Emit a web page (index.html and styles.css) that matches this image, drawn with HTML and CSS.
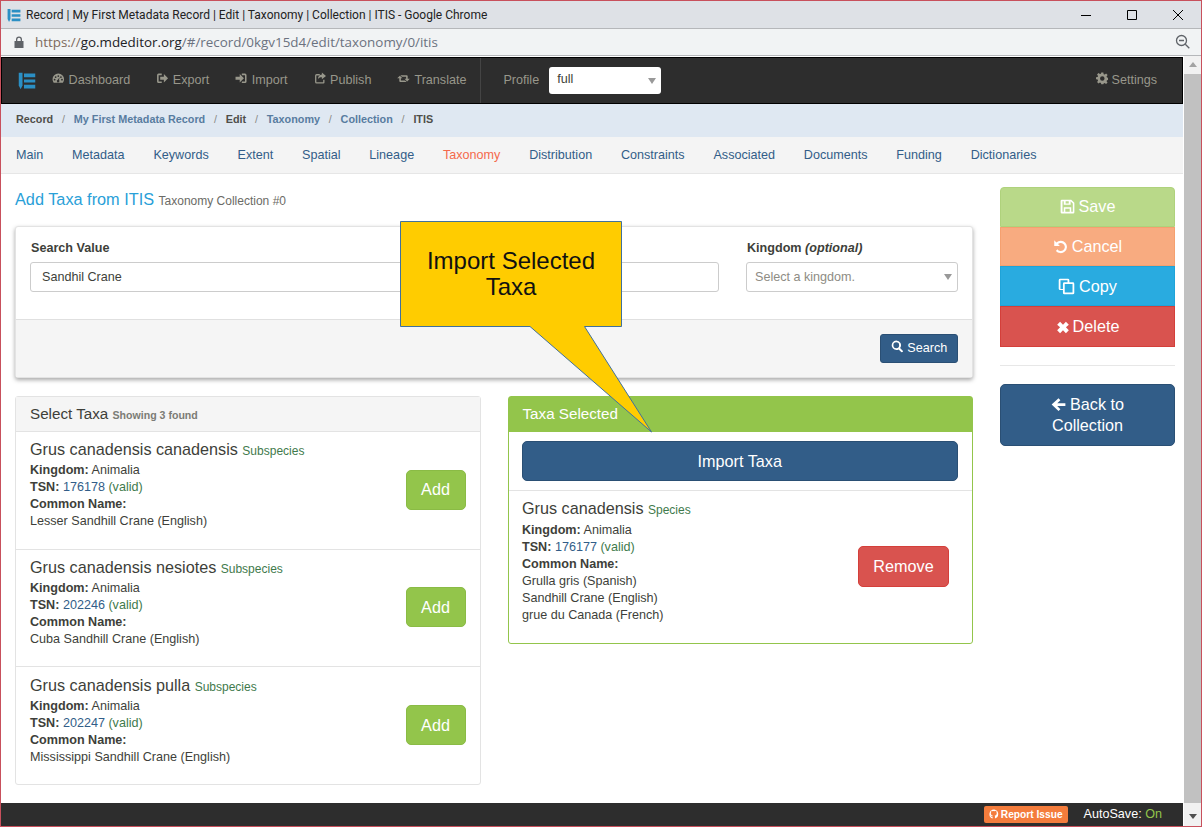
FILE: index.html
```html
<!DOCTYPE html>
<html lang="en">
<head>
    <meta charset="UTF-8">
    <title>Record | My First Metadata Record | Edit | Taxonomy | Collection | ITIS</title>
    <link rel="stylesheet" href="styles.css">
</head>
<body>

<!-- Shared icons -->
<svg class="icon-defs" width="0" height="0">
    <symbol id="i-logo" viewBox="0 0 24 24">
        <path d="M1 1h5v17l-2.500 5L1 18z"/>
        <path d="M8 2h15v5H8zM8 10h15v4H8zM8 17h15v5H8z"/>
    </symbol>
    <symbol id="i-dash" viewBox="0 0 24 24">
        <path fill-rule="evenodd" d="M12 3A11 11 0 0 0 1 14c0 2.500.8 4.800 2.200 6.500h17.600A11 11 0 0 0 23 14 11 11 0 0 0 12 3zM5 13a1.700 1.700 0 1 1 0 3.400A1.700 1.700 0 0 1 5 13zm2-5a1.700 1.700 0 1 1 0 3.400A1.700 1.700 0 0 1 7 8zm5-2a1.700 1.700 0 1 1 0 3.400A1.700 1.700 0 0 1 12 6zm5 2a1.700 1.700 0 1 1 0 3.400A1.700 1.700 0 0 1 17 8zm2 5a1.700 1.700 0 1 1 0 3.400A1.700 1.700 0 0 1 19 13zm-4.500-3l-1.200 5.200a2.500 2.500 0 1 1-2.200-.5z"/>
    </symbol>
    <symbol id="i-export" viewBox="0 0 24 24">
        <path d="M2 6a3 3 0 0 1 3-3h6v3H5v12h6v3H5a3 3 0 0 1-3-3z"/>
        <path d="M8 9h7V4l8 8-8 8v-5H8z"/>
    </symbol>
    <symbol id="i-import" viewBox="0 0 24 24">
        <path d="M1 9h8V4l8 8-8 8v-5H1z"/>
        <path d="M13 3h6a3 3 0 0 1 3 3v12a3 3 0 0 1-3 3h-6v-3h6V6h-6z"/>
    </symbol>
    <symbol id="i-share" viewBox="0 0 24 24">
        <path d="M2 7a3 3 0 0 1 3-3h6v2.500H4.500v13h13V15H20v5a2 2 0 0 1-2 2H5a3 3 0 0 1-3-3z"/>
        <path d="M15 1l8 6.500-8 6.500v-4c-4 0-6 1-7.500 4 0-5 2.500-8.500 7.500-9z"/>
    </symbol>
    <symbol id="i-retweet" viewBox="0 0 24 24">
        <path d="M5 7l5 5H7v4h8l3 3H6a2 2 0 0 1-2-2v-5H0z"/>
        <path d="M19 18l-5-5h3V9H9L6 6h12a2 2 0 0 1 2 2v5h4z"/>
    </symbol>
    <symbol id="i-cog" viewBox="0 0 24 24">
        <path fill-rule="evenodd" d="M10 1h4l.6 3.200 2 .8L19.300 3l2.800 2.800-2 2.700.8 2L24 11v4l-3.100.5-.8 2 1.900 2.700-2.800 2.800-2.700-1.900-2 .8L14 24h-4l-.5-3.100-2-.8L4.800 22 2 19.200l1.900-2.700-.8-2L0 14v-4l3.100-.5.8-2L2 4.800 4.800 2l2.700 1.900 2-.8zM12 8a4.300 4.300 0 1 0 0 8.600A4.300 4.300 0 0 0 12 8z"/>
    </symbol>
    <symbol id="i-search" viewBox="0 0 24 24">
        <path fill-rule="evenodd" d="M10 1a9 9 0 0 1 7.300 14.300l6 6-2.800 2.700-6-6A9 9 0 1 1 10 1zm0 3.500a5.500 5.500 0 1 0 0 11 5.500 5.500 0 0 0 0-11z"/>
    </symbol>
    <symbol id="i-save" viewBox="0 0 24 24">
        <path fill-rule="evenodd" d="M3 1h15l5 5v15a2 2 0 0 1-2 2H3a2 2 0 0 1-2-2V3a2 2 0 0 1 2-2zm1 2.500V20.500h2V13h12v7.500h2.500V7L17 3.500V9H6V3.500zm5 0V7h5V3.500zM8.500 15.500v5h7v-5z"/>
    </symbol>
    <symbol id="i-undo" viewBox="0 0 24 24">
        <path d="M2 2l3.400 3.400A10 10 0 1 1 4.600 19l2.400-2.600A6.500 6.500 0 1 0 8 8l3 3H2z"/>
    </symbol>
    <symbol id="i-copy" viewBox="0 0 24 24">
        <path fill-rule="evenodd" d="M3 1h11a2 2 0 0 1 2 2v3h5a2 2 0 0 1 2 2v13a2 2 0 0 1-2 2H9a2 2 0 0 1-2-2v-4H3a2 2 0 0 1-2-2V3a2 2 0 0 1 2-2zm.5 2v12.500H7V8a2 2 0 0 1 2-2h4.500V3zm6 5.500v12h11v-12z"/>
    </symbol>
    <symbol id="i-times" viewBox="0 0 24 24">
        <path d="M7 3l5 5 5-5 5 5-5 4.500 5 5-5 5-5-5-5 5-5-5 5-5-5-4.500z"/>
    </symbol>
    <symbol id="i-back" viewBox="0 0 24 24">
        <path d="M12 2l3 3-5 5h13v4.500H10l5 5-3 3L1 12z"/>
    </symbol>
    <symbol id="i-github" viewBox="0 0 24 24">
        <path fill-rule="evenodd" d="M12 1a11 11 0 0 0-3.500 21.400v-3.600c-3 .6-3.600-1.400-3.600-1.400-.5-1.200-1.200-1.600-1.200-1.600-1-.7.1-.7.1-.7 1.100.1 1.700 1.100 1.700 1.100 1 1.700 2.600 1.200 3.100.9.100-.7.400-1.200.7-1.500-2.400-.3-5-1.200-5-5.400 0-1.200.4-2.200 1.100-3-.1-.3-.5-1.400.1-2.900 0 0 .9-.3 3 1.100a10 10 0 0 1 5.600 0c2.100-1.400 3-1.100 3-1.100.6 1.500.2 2.600.1 2.900.7.800 1.100 1.800 1.100 3 0 4.200-2.600 5.100-5 5.400.4.300.7 1 .7 2v4.800A11 11 0 0 0 12 1z"/>
    </symbol>
</svg>

<div class="window">

    <!-- Browser chrome -->
    <div class="titlebar">
        <svg class="title-logo"><use href="#i-logo"/></svg>
        <span class="title-text">Record | My First Metadata Record | Edit | Taxonomy | Collection | ITIS - Google Chrome</span>
        <div class="win-controls">
            <svg width="12" height="12" viewBox="0 0 12 12"><path d="M1 6.500h10" stroke="#000" fill="none"/></svg>
            <svg width="12" height="12" viewBox="0 0 12 12"><path d="M1.500 1.500h9v9h-9z" stroke="#000" fill="none"/></svg>
            <svg width="12" height="12" viewBox="0 0 12 12"><path d="M1 1l10 10M11 1L1 11" stroke="#000" fill="none"/></svg>
        </div>
    </div>
    <div class="addressbar">
        <svg class="lock" width="10" height="12" viewBox="0 0 10 12"><path d="M2 5V3.500a3 3 0 0 1 6 0V5h1.500v7H.5V5zm1.300 0h3.400V3.500a1.700 1.700 0 0 0-3.400 0z" fill="#5f6368"/></svg>
        <span class="url"><span class="url-scheme">https://</span><span class="url-host">go.mdeditor.org</span>/#/record/0kgv15d4/edit/taxonomy/0/itis</span>
        <svg class="zoom-out" width="16" height="16" viewBox="0 0 16 16"><circle cx="6.500" cy="6.500" r="5" fill="none" stroke="#5f6368" stroke-width="1.300"/><path d="M4 6.500h5M10.300 10.300l4 4" stroke="#5f6368" stroke-width="1.300" fill="none"/></svg>
    </div>

    <div class="viewport">
        <div class="page">

            <!-- Top navigation -->
            <nav class="topnav">
                <svg class="nav-logo"><use href="#i-logo"/></svg>
                <a class="nav-link nav-first"><svg class="ico"><use href="#i-dash"/></svg>Dashboard</a>
                <a class="nav-link"><svg class="ico"><use href="#i-export"/></svg>Export</a>
                <a class="nav-link"><svg class="ico"><use href="#i-import"/></svg>Import</a>
                <a class="nav-link"><svg class="ico"><use href="#i-share"/></svg>Publish</a>
                <a class="nav-link"><svg class="ico ico-wide"><use href="#i-retweet"/></svg>Translate</a>
                <div class="nav-profile">
                    <span>Profile</span>
                    <div class="nav-select">full<span class="caret"></span></div>
                </div>
                <a class="nav-link nav-settings"><svg class="ico"><use href="#i-cog"/></svg>Settings</a>
            </nav>

            <div class="crumbs">
                <b>Record</b><i>/</i><a>My First Metadata Record</a><i>/</i><b>Edit</b><i>/</i><a>Taxonomy</a><i>/</i><a>Collection</a><i>/</i><b>ITIS</b>
            </div>

            <div class="tabs">
                <a>Main</a><a>Metadata</a><a>Keywords</a><a>Extent</a><a>Spatial</a><a>Lineage</a><a class="active">Taxonomy</a><a>Distribution</a><a>Constraints</a><a>Associated</a><a>Documents</a><a>Funding</a><a>Dictionaries</a>
            </div>

            <div class="content">
                <div class="main-col">
                    <h3 class="page-title">Add Taxa from ITIS <small>Taxonomy Collection #0</small></h3>

                    <!-- Search form -->
                    <div class="search-card">
                        <div class="search-body">
                            <div class="field field-wide">
                                <label>Search Value</label>
                                <input class="text-input" type="text" value="Sandhil Crane">
                            </div>
                            <div class="field field-kingdom">
                                <label>Kingdom <em>(optional)</em></label>
                                <div class="select-box">Select a kingdom.<span class="caret"></span></div>
                            </div>
                        </div>
                        <div class="search-foot">
                            <button class="btn-search"><svg class="ico"><use href="#i-search"/></svg>Search</button>
                        </div>
                    </div>

                    <div class="columns">
                        <!-- Results -->
                        <div class="panel">
                            <div class="panel-head">Select Taxa <small>Showing 3 found</small></div>
                            <div class="taxon">
                                <div class="taxon-info">
                                    <h4>Grus canadensis canadensis <small>Subspecies</small></h4>
                                    <div><b>Kingdom:</b> Animalia</div>
                                    <div><b>TSN:</b> <span class="tsn">176178</span> <span class="valid">(valid)</span></div>
                                    <div><b>Common Name:</b></div>
                                    <div>Lesser Sandhill Crane (English)</div>
                                </div>
                                <button class="btn-add">Add</button>
                            </div>
                            <div class="taxon">
                                <div class="taxon-info">
                                    <h4>Grus canadensis nesiotes <small>Subspecies</small></h4>
                                    <div><b>Kingdom:</b> Animalia</div>
                                    <div><b>TSN:</b> <span class="tsn">202246</span> <span class="valid">(valid)</span></div>
                                    <div><b>Common Name:</b></div>
                                    <div>Cuba Sandhill Crane (English)</div>
                                </div>
                                <button class="btn-add">Add</button>
                            </div>
                            <div class="taxon taxon-last">
                                <div class="taxon-info">
                                    <h4>Grus canadensis pulla <small>Subspecies</small></h4>
                                    <div><b>Kingdom:</b> Animalia</div>
                                    <div><b>TSN:</b> <span class="tsn">202247</span> <span class="valid">(valid)</span></div>
                                    <div><b>Common Name:</b></div>
                                    <div>Mississippi Sandhill Crane (English)</div>
                                </div>
                                <button class="btn-add">Add</button>
                            </div>
                        </div>

                        <!-- Selected -->
                        <div class="panel panel-green">
                            <div class="panel-head">Taxa Selected</div>
                            <div class="import-row">
                                <button class="btn-import">Import Taxa</button>
                            </div>
                            <div class="taxon taxon-selected">
                                <div class="taxon-info">
                                    <h4>Grus canadensis <small>Species</small></h4>
                                    <div><b>Kingdom:</b> Animalia</div>
                                    <div><b>TSN:</b> <span class="tsn">176177</span> <span class="valid">(valid)</span></div>
                                    <div><b>Common Name:</b></div>
                                    <div>Grulla gris (Spanish)</div>
                                    <div>Sandhill Crane (English)</div>
                                    <div>grue du Canada (French)</div>
                                </div>
                                <button class="btn-remove">Remove</button>
                            </div>
                        </div>
                    </div>
                </div>

                <!-- Record actions -->
                <div class="side-col">
                    <div class="action-stack">
                        <button class="action act-save"><svg class="ico"><use href="#i-save"/></svg>Save</button>
                        <button class="action act-cancel"><svg class="ico"><use href="#i-undo"/></svg>Cancel</button>
                        <button class="action act-copy"><svg class="ico"><use href="#i-copy"/></svg>Copy</button>
                        <button class="action act-delete"><svg class="ico"><use href="#i-times"/></svg>Delete</button>
                    </div>
                    <hr class="side-rule">
                    <button class="action act-back"><svg class="ico"><use href="#i-back"/></svg>Back to Collection</button>
                </div>
            </div>

            <footer class="footer">
                <span class="report"><svg class="ico"><use href="#i-github"/></svg>Report Issue</span>
                <span class="autosave">AutoSave: <span class="on">On</span></span>
            </footer>
        </div>

        <div class="scrollbar">
            <span class="arrow-up"></span>
            <div class="thumb"></div>
            <span class="arrow-down"></span>
        </div>
    </div>

    <!-- Annotation drawn over the screenshot -->
    <div class="callout">
        <svg width="254" height="213" viewBox="0 0 254 213">
            <path class="callout-shape" d="M.5.500h221v105h-37L251.500 211 130 105.500H.5z"/>
        </svg>
        <div class="callout-text">Import Selected<br>Taxa</div>
    </div>
</div>

</body>
</html>
```

FILE: styles.css
```css
html, body {
    margin: 0;
    padding: 0;
    height: 100%;
    overflow: hidden;
}

body {
    font-family: "Liberation Sans", Arial, sans-serif;
    font-size: 12.6px;
    line-height: 17px;
    color: #3e3f3a;
}

.icon-defs {
    position: absolute;
}

.ico {
    width: 1em;
    height: 1em;
    fill: currentColor;
    vertical-align: -1px;
    margin-right: 4px;
}

.ico-wide {
    width: 15px;
    margin-left: -1px;
    margin-right: 3px;
}

button {
    font-family: inherit;
    cursor: pointer;
}

.window {
    position: relative;
    box-sizing: border-box;
    width: 1202px;
    height: 827px;
    border: 1px solid #c8505c;
    display: flex;
    flex-direction: column;
    background: #fff;
}

/* Browser chrome */
.titlebar {
    box-sizing: border-box;
    height: 28px;
    flex: none;
    display: flex;
    align-items: center;
    background: #dee1e6;
    border-bottom: 1px solid #b5b7ba;
    padding: 1px 0 0 6px;
}

.title-logo {
    width: 14px;
    height: 15px;
    fill: #2b8fc4;
    margin-right: 5px;
}

.title-text {
    font-family: Roboto, sans-serif;
    font-size: 12px;
    color: #222;
}

.win-controls {
    margin-left: auto;
    display: flex;
    gap: 34px;
    margin-right: 17px;
}

.addressbar {
    box-sizing: border-box;
    height: 27px;
    flex: none;
    display: flex;
    align-items: center;
    background: #f1f3f4;
    border-bottom: 1px solid #b5b7ba;
    padding-left: 13px;
}

.url {
    font-family: "Open Sans", sans-serif;
    font-size: 13.4px;
    color: #6b7280;
    margin-left: 11px;
}

.url-scheme {
    color: #7c6a5c;
}

.url-host {
    color: #202124;
}

.zoom-out {
    margin-left: auto;
    margin-right: 10px;
}

.viewport {
    flex: 1;
    min-height: 0;
    display: flex;
}

.page {
    flex: 1;
    min-width: 0;
    display: flex;
    flex-direction: column;
}

.scrollbar {
    width: 17px;
    margin-left: 1px;
    flex: none;
    background: #f1f1f1;
    display: flex;
    flex-direction: column;
    align-items: center;
}

.thumb {
    width: 100%;
    flex: 1;
    background: #c1c1c1;
    margin: 7px 0 11px;
}

.arrow-up {
    margin-top: 6px;
    border: 4px solid transparent;
    border-top: 0;
    border-bottom: 5px solid #a3a3a3;
}

.arrow-down {
    margin-bottom: 7px;
    border: 4px solid transparent;
    border-bottom: 0;
    border-top: 5px solid #505050;
}

/* Top navigation */
.topnav {
    box-sizing: border-box;
    height: 47px;
    margin-top: 1px;
    flex: none;
    display: flex;
    align-items: center;
    background: #2d2d2d;
    border: 1px solid #000;
    color: #98978b;
    font-size: 12.6px;
}

.nav-logo {
    width: 18px;
    height: 18px;
    fill: #2b8fc4;
    margin-left: 16px;
    margin-right: 16px;
}

.nav-link {
    margin-right: 26px;
    white-space: nowrap;
}

.nav-profile {
    align-self: stretch;
    display: flex;
    align-items: center;
    gap: 10px;
    border-left: 1px solid #444;
    padding-left: 22px;
    margin-left: -12px;
}

.nav-select {
    position: relative;
    box-sizing: border-box;
    width: 112px;
    height: 27px;
    line-height: 25px;
    padding-left: 8px;
    background: #fff;
    border-radius: 3px;
    color: #3e3f3a;
}

.caret {
    position: absolute;
    right: 5px;
    top: 11px;
    border: 4px solid transparent;
    border-bottom: 0;
    border-top: 6px solid #999;
}

.nav-link.nav-settings {
    margin-left: auto;
    margin-right: 25px;
}

.nav-settings .ico {
    margin-right: 3px;
}

/* Breadcrumbs and tabs */
.crumbs {
    box-sizing: border-box;
    height: 33px;
    flex: none;
    padding: 0 0 3px 15px;
    display: flex;
    align-items: center;
    background: #dfe8f2;
    font-size: 10.8px;
    font-weight: bold;
    color: #4f4f4a;
}

.crumbs a {
    color: #587ca0;
}

.crumbs i {
    font-style: normal;
    font-weight: normal;
    color: #8a8a85;
    margin: 0 8.800px;
}

.tabs {
    box-sizing: border-box;
    height: 37px;
    flex: none;
    padding-left: 15px;
    display: flex;
    align-items: center;
    gap: 28.800px;
    background: #f4f4f4;
    border-bottom: 1px solid #e6e6e6;
    color: #325d88;
}

.tabs .active {
    color: #f4694c;
}

/* Page content */
.content {
    flex: 1;
    min-height: 0;
    display: flex;
    padding: 0 9px 0 14px;
    gap: 27px;
}

.main-col {
    width: 958px;
    flex: none;
}

.page-title {
    margin: 15px 0 17px;
    font-size: 16.300px;
    font-weight: normal;
    line-height: 20px;
    color: #29a0d8;
}

.page-title small {
    font-size: 12px;
    line-height: 1;
    color: #6b6b66;
}

.search-card {
    height: 152px;
    display: flex;
    flex-direction: column;
    background: #fff;
    border: 1px solid #e3e3e3;
    border-radius: 3px;
    box-sizing: border-box;
    box-shadow: 0 2px 4px rgba(0, 0, 0, 0.35);
}

.search-body {
    box-sizing: border-box;
    height: 93px;
    flex: none;
    display: flex;
    gap: 27px;
    padding: 13px 14px 0;
    border-bottom: 1px solid #e0e0e0;
}

.field label {
    display: block;
    font-weight: bold;
    margin: 0 0 5px 1px;
    color: #3e3f3a;
}

.field label em {
    font-style: italic;
}

.field-wide {
    flex: 1;
}

.field-kingdom {
    width: 212px;
    flex: none;
}

.text-input, .select-box {
    box-sizing: border-box;
    width: 100%;
    height: 30px;
    border: 1px solid #ccc;
    border-radius: 3px;
    padding: 0 11px;
    font-family: inherit;
    font-size: 12.6px;
    color: #3e3f3a;
    outline: none;
    background: #fff;
}

.select-box {
    position: relative;
    line-height: 28px;
    padding-left: 8px;
    color: #8e8c84;
}

.search-foot {
    flex: 1;
    display: flex;
    justify-content: flex-end;
    align-items: flex-start;
    padding: 14px 14px 0;
    background: #f5f5f5;
}

.btn-search {
    box-sizing: border-box;
    height: 29px;
    width: 78px;
    padding: 0 0 2px;
    background: #325d88;
    border: 1px solid #2a4f74;
    border-radius: 3px;
    color: #fff;
    font-size: 12.6px;
}

.columns {
    display: flex;
    gap: 27px;
    align-items: flex-start;
    margin-top: 18px;
}

.panel {
    box-sizing: border-box;
    width: 466px;
    border: 1px solid #e3e3e3;
    border-radius: 3px;
    background: #fff;
}

.panel-head {
    box-sizing: border-box;
    height: 35px;
    line-height: 33px;
    padding-left: 14px;
    background: #f5f5f5;
    border-bottom: 1px solid #e3e3e3;
    font-size: 15.200px;
}

.panel-head small {
    font-size: 10.600px;
    font-weight: bold;
    color: #7c7c76;
}

.panel-green {
    border-color: #93c54b;
}

.panel-green .panel-head {
    background: #93c54b;
    border-bottom-color: #93c54b;
    color: #fff;
}

.taxon {
    box-sizing: border-box;
    height: 117px;
    display: flex;
    justify-content: space-between;
    align-items: center;
    padding: 7px 14px 0;
    border-bottom: 1px solid #e3e3e3;
}

.panel-head + .taxon {
    height: 118px;
}

.taxon:last-child {
    border-bottom: 0;
}

.taxon-last {
    padding-top: 8px;
}

.taxon-info {
    align-self: flex-start;
}

.taxon h4 {
    margin: 0 0 3px;
    font-size: 16.2px;
    font-weight: normal;
    line-height: 20px;
}

.taxon h4 small {
    font-size: 12px;
    line-height: 1;
    color: #3f7a4c;
}

.tsn {
    color: #325d88;
}

.valid {
    color: #3f7a4c;
}

.btn-add, .btn-remove, .btn-import {
    box-sizing: border-box;
    padding: 0;
    color: #fff;
    font-size: 16.2px;
    border-radius: 5px;
}

.btn-add {
    width: 60px;
    height: 40px;
    margin-bottom: 9px;
    background: #93c54b;
    border: 1px solid #8abb45;
}

.import-row {
    box-sizing: border-box;
    height: 59px;
    padding: 9px 14px 0 13px;
    border-bottom: 1px solid #e3e3e3;
}

.btn-import {
    width: 100%;
    height: 40px;
    background: #325d88;
    border: 1px solid #2a4f74;
}

.taxon-selected {
    height: 152px;
    padding: 7px 23px 0 13.500px;
}

.taxon-selected h4 {
    margin-bottom: 4px;
}

.btn-remove {
    width: 91px;
    height: 41px;
    background: #d9534f;
    border: 1px solid #d43f3a;
    margin-top: -9px;
}

/* Action buttons on the right */
.side-col {
    width: 175px;
    flex: none;
    padding-top: 13px;
}

.action-stack {
    display: flex;
    flex-direction: column;
}

.action {
    box-sizing: border-box;
    width: 100%;
    height: 40px;
    padding: 0;
    color: #fff;
    font-size: 16.2px;
    border: 1px solid transparent;
}

.action .ico {
    width: 15px;
    height: 15px;
    vertical-align: -2px;
    margin-right: 4px;
}

.action.act-copy .ico {
    width: 17px;
    height: 17px;
    vertical-align: -3px;
}

.action.act-delete .ico {
    width: 14px;
    height: 14px;
    vertical-align: -2px;
    margin-right: 3px;
}

.act-save {
    padding-bottom: 2px;
    background: #b9d989;
    border-color: #afd27c;
    border-radius: 4px 4px 0 0;
}

.act-cancel {
    background: #f8ab80;
    border-color: #f5a06f;
    height: 39px;
}

.act-copy {
    background: #29abe0;
    border-color: #1fa3d8;
}

.act-delete {
    background: #d9534f;
    border-color: #d43f3a;
    height: 41px;
}

.side-rule {
    border: 0;
    border-top: 1px solid #e7e7e7;
    margin: 18px 0;
}

.act-back {
    height: 62px;
    padding: 0 20px;
    line-height: 21px;
    background: #325d88;
    border-color: #2a4f74;
    border-radius: 5px;
}

/* Footer */
.footer {
    box-sizing: border-box;
    height: 23px;
    flex: none;
    display: flex;
    align-items: center;
    justify-content: flex-end;
    background: #2d2d2d;
    padding-right: 21px;
}

.report {
    box-sizing: border-box;
    height: 17px;
    line-height: 17px;
    padding: 0 5px;
    background: #f47c3c;
    border-radius: 2px;
    color: #fff;
    font-size: 10.200px;
    font-weight: bold;
}

.report .ico {
    margin-right: 2px;
}

.autosave {
    margin-left: 16px;
    color: #fff;
}

.on {
    color: #93c54b;
}

/* Annotation */
.callout {
    position: absolute;
    left: 399px;
    top: 220px;
    width: 254px;
    height: 213px;
}

.callout svg {
    display: block;
}

.callout-shape {
    fill: #ffcc00;
    stroke: #41719c;
    stroke-width: 1;
}

.callout-text {
    position: absolute;
    left: 0;
    top: 27px;
    width: 222px;
    text-align: center;
    font-size: 24px;
    line-height: 26px;
    color: #111;
}
```
